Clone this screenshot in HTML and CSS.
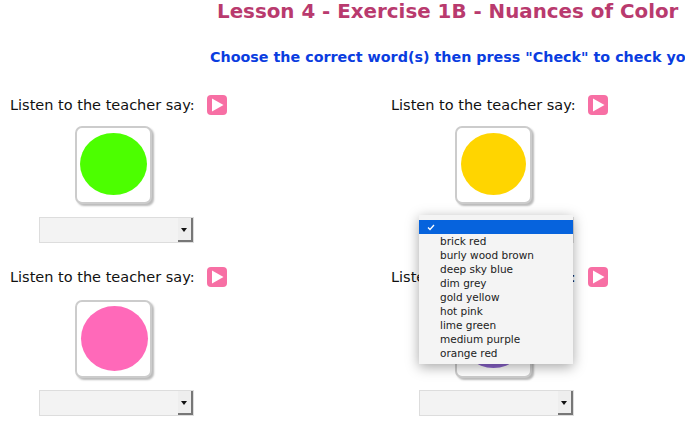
FILE: index.html
```html
<!DOCTYPE html>
<html>
	<head>
		<meta charset="UTF-8">
		<title>Lesson 4 - Exercise 1B - Nuances of Color</title>
		<link rel="stylesheet" href="styles.css">
	</head>
	<body>
		<h1 class="title">Lesson 4 - Exercise 1B - Nuances of Color</h1>
		<h2 class="instructions">Choose the correct word(s) then press "Check" to check your answers.</h2>

		<div class="exercise">
			<div class="item">
				<p class="listen">Listen to the teacher say: <svg class="play" viewBox="0 0 20 20"><rect width="20" height="20" rx="4" fill="#f76fa4"/><path d="M5 3.5 L16.5 10 L5 16.5 Z" fill="#fff"/></svg></p>
				<div class="card"><span class="dot lime"></span></div>
				<div class="select"><span class="arrow"></span></div>
			</div>
			<div class="item">
				<p class="listen">Listen to the teacher say: <svg class="play" viewBox="0 0 20 20"><rect width="20" height="20" rx="4" fill="#f76fa4"/><path d="M5 3.5 L16.5 10 L5 16.5 Z" fill="#fff"/></svg></p>
				<div class="card"><span class="dot gold"></span></div>
				<div class="select"><span class="arrow"></span></div>
				<ul class="menu">
					<li class="current"><svg class="check" viewBox="0 0 8 7"><path d="M1 3.5 L3 5.5 L7 1" fill="none" stroke="#fff" stroke-width="1.3"/></svg></li>
					<li>brick red</li>
					<li>burly wood brown</li>
					<li>deep sky blue</li>
					<li>dim grey</li>
					<li>gold yellow</li>
					<li>hot pink</li>
					<li>lime green</li>
					<li>medium purple</li>
					<li>orange red</li>
				</ul>
			</div>
			<div class="item">
				<p class="listen">Listen to the teacher say: <svg class="play" viewBox="0 0 20 20"><rect width="20" height="20" rx="4" fill="#f76fa4"/><path d="M5 3.5 L16.5 10 L5 16.5 Z" fill="#fff"/></svg></p>
				<div class="card"><span class="dot pink"></span></div>
				<div class="select"><span class="arrow"></span></div>
			</div>
			<div class="item">
				<p class="listen">Listen to the teacher say: <svg class="play" viewBox="0 0 20 20"><rect width="20" height="20" rx="4" fill="#f76fa4"/><path d="M5 3.5 L16.5 10 L5 16.5 Z" fill="#fff"/></svg></p>
				<div class="card"><span class="dot purple"></span></div>
				<div class="select"><span class="arrow"></span></div>
			</div>
		</div>
	</body>
</html>
```

FILE: styles.css
```css
html,body{margin:0;padding:0;background:#fff;overflow:hidden;height:100%;}
body{font-family:"DejaVu Sans",Verdana,sans-serif;color:#111;}

.title{margin:0;padding:0 0 0 217px;font-size:19.85px;line-height:24px;font-weight:bold;color:#b93a6e;white-space:nowrap;}
.instructions{margin:24px 0 0;padding-left:210px;font-size:14.3px;line-height:18px;font-weight:bold;color:#0a3de0;white-space:nowrap;}

.exercise{display:grid;grid-template-columns:380px 380px;grid-auto-rows:172px;margin-top:27px;}
.item{position:relative;}

.listen{display:flex;align-items:center;margin:0;padding-left:10px;height:24px;font-size:14.5px;line-height:24px;white-space:pre;}
.item:nth-child(even) .listen{padding-left:11px;}
.play{width:20px;height:20px;margin-left:8px;}

.card{display:flex;align-items:center;justify-content:center;box-sizing:border-box;width:77px;height:78px;margin:9px 0 0 75px;background:#fff;border:2px solid #ccc;border-radius:7px;box-shadow:2px 2px 2px #bbb;}
.dot{display:block;border-radius:50%;height:62px;}
.lime{width:67px;margin-bottom:2px;background:#4cff00;}
.gold{width:65px;margin-bottom:2px;background:#ffd500;}
.pink{width:67px;height:65px;margin:0 0 1px 2px;background:#ff69b9;}
.purple{width:65px;margin-bottom:4px;background:#8a63cc;}

.select{display:flex;justify-content:flex-end;box-sizing:border-box;width:155px;height:26px;margin:13px 0 0 39px;background:#f3f3f3;border:1px solid #ddd;}
.arrow{position:relative;width:13px;background:#eee;border-right:2px solid #777;border-bottom:2px solid #777;}
.arrow:after{content:"";position:absolute;left:3px;top:10px;border-style:solid;border-width:4px 3.5px 0;border-color:#111 transparent transparent;}

/* second row sits a little lower under its label */
.item:nth-child(n+3) .card{margin-top:11px;}
.item:nth-child(n+3) .select{margin-top:12px;}

.menu{position:absolute;left:39px;top:122px;box-sizing:border-box;width:154px;height:149px;margin:0;padding:5px 0;list-style:none;background:#f4f4f4;box-shadow:0 3px 12px rgba(0,0,0,.35);font-size:10.5px;line-height:14px;color:#222;z-index:10;}
.menu li{height:14px;padding-left:21px;}
.menu .current{position:relative;background:#0663dd;}
.check{position:absolute;left:8px;top:4px;width:8px;height:7px;}
```
